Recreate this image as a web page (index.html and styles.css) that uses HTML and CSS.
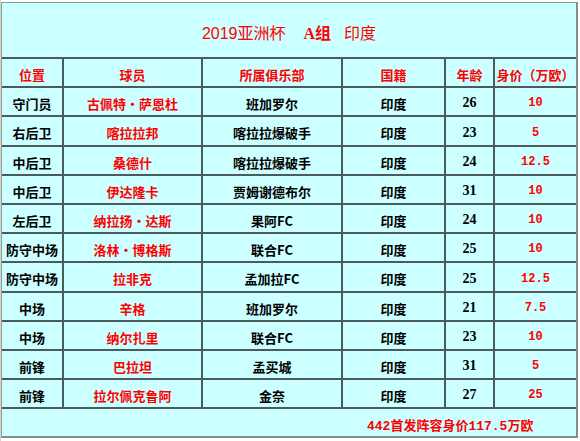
FILE: index.html
```html
<!DOCTYPE html>
<html lang="zh">
<head>
<meta charset="utf-8">
<link rel="stylesheet" href="styles.css">
</head>
<body>
<div class="frame">
  <div class="sheet">
    <div class="title"><span class="t1">2019亚洲杯</span><span class="t2">A组</span><span class="t3">印度</span></div>

    <div class="h">位置</div><div class="h">球员</div><div class="h">所属俱乐部</div><div class="h">国籍</div><div class="h">年龄</div><div class="h">身价（万欧）</div>

    <div class="c">守门员</div><div class="c red">古佩特·萨恩杜</div><div class="c">班加罗尔</div><div class="c">印度</div><div class="c num">26</div><div class="c price">10</div>
    <div class="c tall">右后卫</div><div class="c red tall">喀拉拉邦</div><div class="c tall">喀拉拉爆破手</div><div class="c tall">印度</div><div class="c num tall">23</div><div class="c price tall">5</div>
    <div class="c">中后卫</div><div class="c red">桑德什</div><div class="c">喀拉拉爆破手</div><div class="c">印度</div><div class="c num">24</div><div class="c price">12.5</div>
    <div class="c">中后卫</div><div class="c red">伊达隆卡</div><div class="c">贾姆谢德布尔</div><div class="c">印度</div><div class="c num">31</div><div class="c price">10</div>
    <div class="c">左后卫</div><div class="c red">纳拉扬·达斯</div><div class="c">果阿FC</div><div class="c">印度</div><div class="c num">24</div><div class="c price">10</div>
    <div class="c">防守中场</div><div class="c red">洛林·博格斯</div><div class="c">联合FC</div><div class="c">印度</div><div class="c num">25</div><div class="c price">10</div>
    <div class="c tall">防守中场</div><div class="c red tall">拉非克</div><div class="c tall">孟加拉FC</div><div class="c tall">印度</div><div class="c num tall">25</div><div class="c price tall">12.5</div>
    <div class="c">中场</div><div class="c red">辛格</div><div class="c">班加罗尔</div><div class="c">印度</div><div class="c num">21</div><div class="c price">7.5</div>
    <div class="c">中场</div><div class="c red">纳尔扎里</div><div class="c">联合FC</div><div class="c">印度</div><div class="c num">23</div><div class="c price">10</div>
    <div class="c">前锋</div><div class="c red">巴拉坦</div><div class="c">孟买城</div><div class="c">印度</div><div class="c num">31</div><div class="c price">5</div>
    <div class="c">前锋</div><div class="c red">拉尔佩克鲁阿</div><div class="c">金奈</div><div class="c">印度</div><div class="c num">27</div><div class="c price">25</div>

    <div class="foot">442首发阵容身价117.5万欧</div>
  </div>
</div>
</body>
</html>
```

FILE: styles.css
```css
html, body {
  margin: 0;
  padding: 0;
  background: #ffffff;
}

body {
  width: 580px;
  height: 441px;
  overflow: hidden;
}

.frame {
  padding-top: 2px;
  border-left: 1px solid #d8d4cc;
  height: 439px;
}

.sheet {
  width: 574px;
  display: grid;
  grid-template-columns: 60px 137px 138px 101px 47px 81px;
  grid-template-rows: 54px 27px 27px 28px 27px 27px 27px 27px 28px 27px 27px 27px 27px 27px;
  gap: 2px;
  background: #4b5b5b;
  border-left: 1px solid #8e9a9a;
  border-top: 1px solid #8a9a9a;
  border-right: 2px solid #7f8f8f;
  border-bottom: 2px solid #7f8f8f;
  font-family: "Noto Sans CJK SC", "Liberation Sans", sans-serif;
  font-size: 13px;
  font-weight: 700;
  color: #000;
}

.sheet > div {
  background: #ccffff;
  display: flex;
  align-items: center;
  justify-content: center;
  padding-top: 3px;
  box-sizing: border-box;
  white-space: nowrap;
}

.title {
  grid-column: 1 / -1;
  color: #ff0000;
  font-size: 16px;
  font-weight: 400;
  font-family: "Liberation Sans", "Noto Sans CJK SC", sans-serif;
}

.title .t2 {
  margin-left: 18px;
  font-family: "Liberation Serif", "Noto Sans CJK SC", serif;
  font-weight: 700;
}

.title .t3 {
  margin-left: 13px;
}

.h {
  color: #ff0000;
}

.red {
  color: #ff0000;
}

.num {
  font-family: "Liberation Serif", serif;
  font-size: 14px;
}

.price {
  color: #ff0000;
  font-family: "Liberation Mono", monospace;
  font-size: 12px;
}

.foot {
  grid-column: 1 / -1;
  justify-content: flex-start !important;
  padding-left: 365px;
  color: #ff0000;
  font-family: "Liberation Mono", "Noto Sans CJK SC", monospace;
  font-size: 13px;
}
```
